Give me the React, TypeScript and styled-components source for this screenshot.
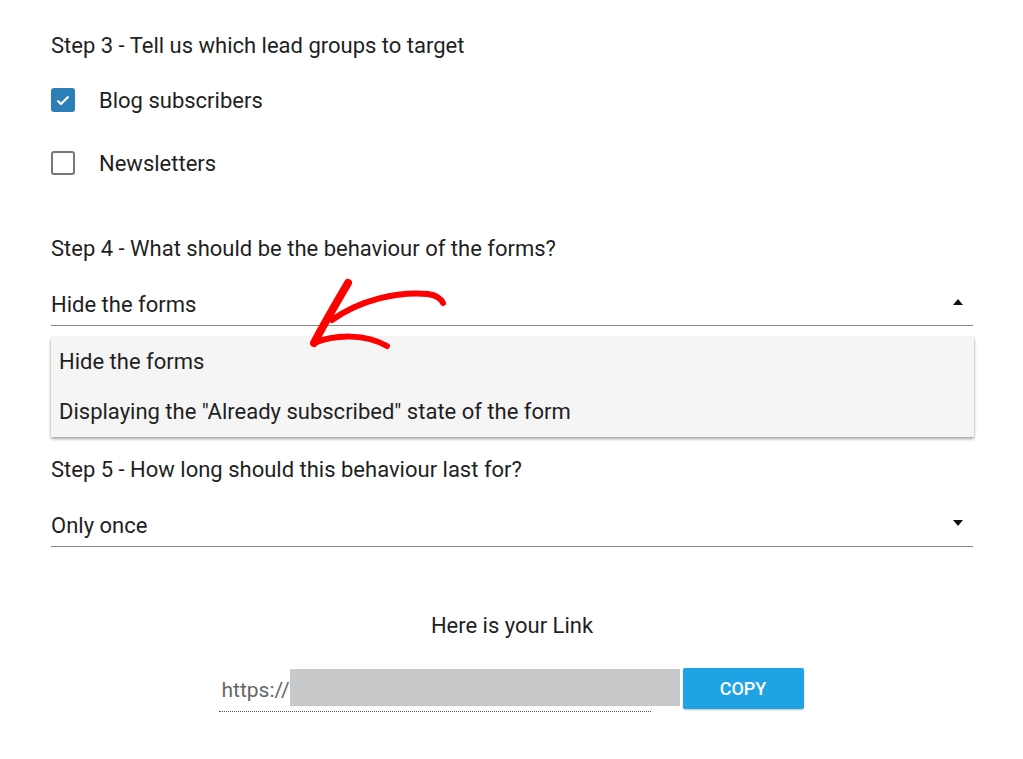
import React from "react";
import styled, { createGlobalStyle } from "styled-components";

const Global = createGlobalStyle`
  html, body { margin: 0; padding: 0; background: #fff; }
  body { font-family: Roboto, "Noto Sans", Arial, sans-serif; color: #1f1f1f; }
`;

const Page = styled.div`
  position: relative;
  width: 1023px;
  height: 759px;
  overflow: hidden;
  box-sizing: border-box;
  padding: 34px 50px 0 51px;
`;

const Heading = styled.div<{ $top?: number }>`
  height: 24px;
  line-height: 24px;
  font-size: 22px;
  margin-top: ${(p) => p.$top ?? 0}px;
`;

const CheckRow = styled.label<{ $top: number }>`
  display: flex;
  align-items: center;
  height: 40px;
  margin-top: ${(p) => p.$top}px;
  font-size: 22px;
  gap: 24px;
`;

const Box = styled.span<{ $checked?: boolean }>`
  width: 24px;
  height: 24px;
  box-sizing: border-box;
  border-radius: 3px;
  display: flex;
  align-items: center;
  justify-content: center;
  background: ${(p) => (p.$checked ? "#2c7fb6" : "#fff")};
  border: ${(p) => (p.$checked ? "none" : "2px solid #777")};
`;

const SelectWrap = styled.div`
  position: relative;
  margin-top: 22px;
`;

const SelectBox = styled.div`
  height: 42px;
  width: 922px;
  display: flex;
  align-items: center;
  justify-content: space-between;
  border-bottom: 1px solid #888;
  font-size: 22px;
`;

const Caret = styled.span<{ $up?: boolean }>`
  width: 0;
  height: 0;
  margin-right: 10px;
  border-left: 5px solid transparent;
  border-right: 5px solid transparent;
  ${(p) => (p.$up ? "border-bottom: 6px solid #111;" : "border-top: 6px solid #111;")}
  transform: translateY(-2px);
`;

const Menu = styled.div`
  position: absolute;
  left: 0;
  top: calc(100% + 11px);
  width: 923px;
  background: #f5f5f5;
  box-shadow: 0 2px 3px rgba(0, 0, 0, 0.35), 0 0 2px rgba(0, 0, 0, 0.08);
  z-index: 2;
`;

const MenuItem = styled.div`
  height: 50px;
  line-height: 50px;
  padding-left: 8px;
  font-size: 22px;
  color: #1f1f1f;
`;

const LinkTitle = styled.div`
  margin-top: 67px;
  height: 24px;
  line-height: 24px;
  font-size: 22px;
  text-align: center;
  width: 922px;
`;

const LinkRow = styled.div`
  display: flex;
  justify-content: center;
  align-items: flex-start;
  margin-top: 30px;
  width: 922px;
  transform: translateX(-1px);
`;

const LinkField = styled.div`
  width: 432px;
  height: 44px;
  display: flex;
  align-items: center;
  border-bottom: 1px dotted #555;
  padding-left: 3px;
  box-sizing: border-box;
`;

const Prefix = styled.span`
  font-size: 21px;
  color: #666;
  flex-shrink: 0;
`;

const Redaction = styled.span`
  flex-shrink: 0;
  align-self: flex-start;
  margin-top: 1px;
  width: 390px;
  height: 37px;
  background: #c8c9ca;
`;

const CopyButton = styled.button`
  margin-left: 32px;
  width: 121px;
  height: 41px;
  border: none;
  border-radius: 2px;
  background: #1fa3e4;
  color: #fff;
  font-family: Roboto, Arial, sans-serif;
  font-size: 18px;
  font-weight: 500;
  box-shadow: 0 1px 2px rgba(0, 0, 0, 0.25);
  cursor: pointer;
`;

const Annotation = styled.svg`
  position: absolute;
  left: 300px;
  top: 275px;
  pointer-events: none;
  z-index: 3;
`;

export default function App() {
  return (
    <>
      <Global />
      <Page>
        <Heading>Step 3 - Tell us which lead groups to target</Heading>
        <CheckRow $top={22}>
          <Box $checked>
            <svg width="14" height="11" viewBox="0 0 14 11">
              <path d="M1.5 5.5 L5 9 L12.5 1.5" fill="none" stroke="#fff" strokeWidth="2.2" />
            </svg>
          </Box>
          Blog subscribers
        </CheckRow>
        <CheckRow $top={23}>
          <Box />
          Newsletters
        </CheckRow>
        <Heading $top={54}>Step 4 - What should be the behaviour of the forms?</Heading>
        <SelectWrap>
          <SelectBox>
            <span>Hide the forms</span>
            <Caret $up />
          </SelectBox>
          <Menu>
            <MenuItem>Hide the forms</MenuItem>
            <MenuItem>Displaying the "Already subscribed" state of the form</MenuItem>
          </Menu>
        </SelectWrap>
        <Heading $top={132}>Step 5 - How long should this behaviour last for?</Heading>
        <SelectWrap>
          <SelectBox>
            <span>Only once</span>
            <Caret />
          </SelectBox>
        </SelectWrap>
        <LinkTitle>Here is your Link</LinkTitle>
        <LinkRow>
          <LinkField>
            <Prefix>https://</Prefix>
            <Redaction />
          </LinkField>
          <CopyButton>COPY</CopyButton>
        </LinkRow>
        <Annotation width="160" height="85" viewBox="300 275 160 85">
          <g fill="none" stroke="#f00" strokeLinecap="round" strokeLinejoin="round">
            <path d="M348 283 C338 300 324 324 314 343" strokeWidth="8" />
            <path d="M332 320 C360 300 398 291 428 294 C436 295 441 299 443 303" strokeWidth="6" />
            <path d="M314 343 C336 334 366 334 387 346" strokeWidth="6" />
          </g>
        </Annotation>
      </Page>
    </>
  );
}
